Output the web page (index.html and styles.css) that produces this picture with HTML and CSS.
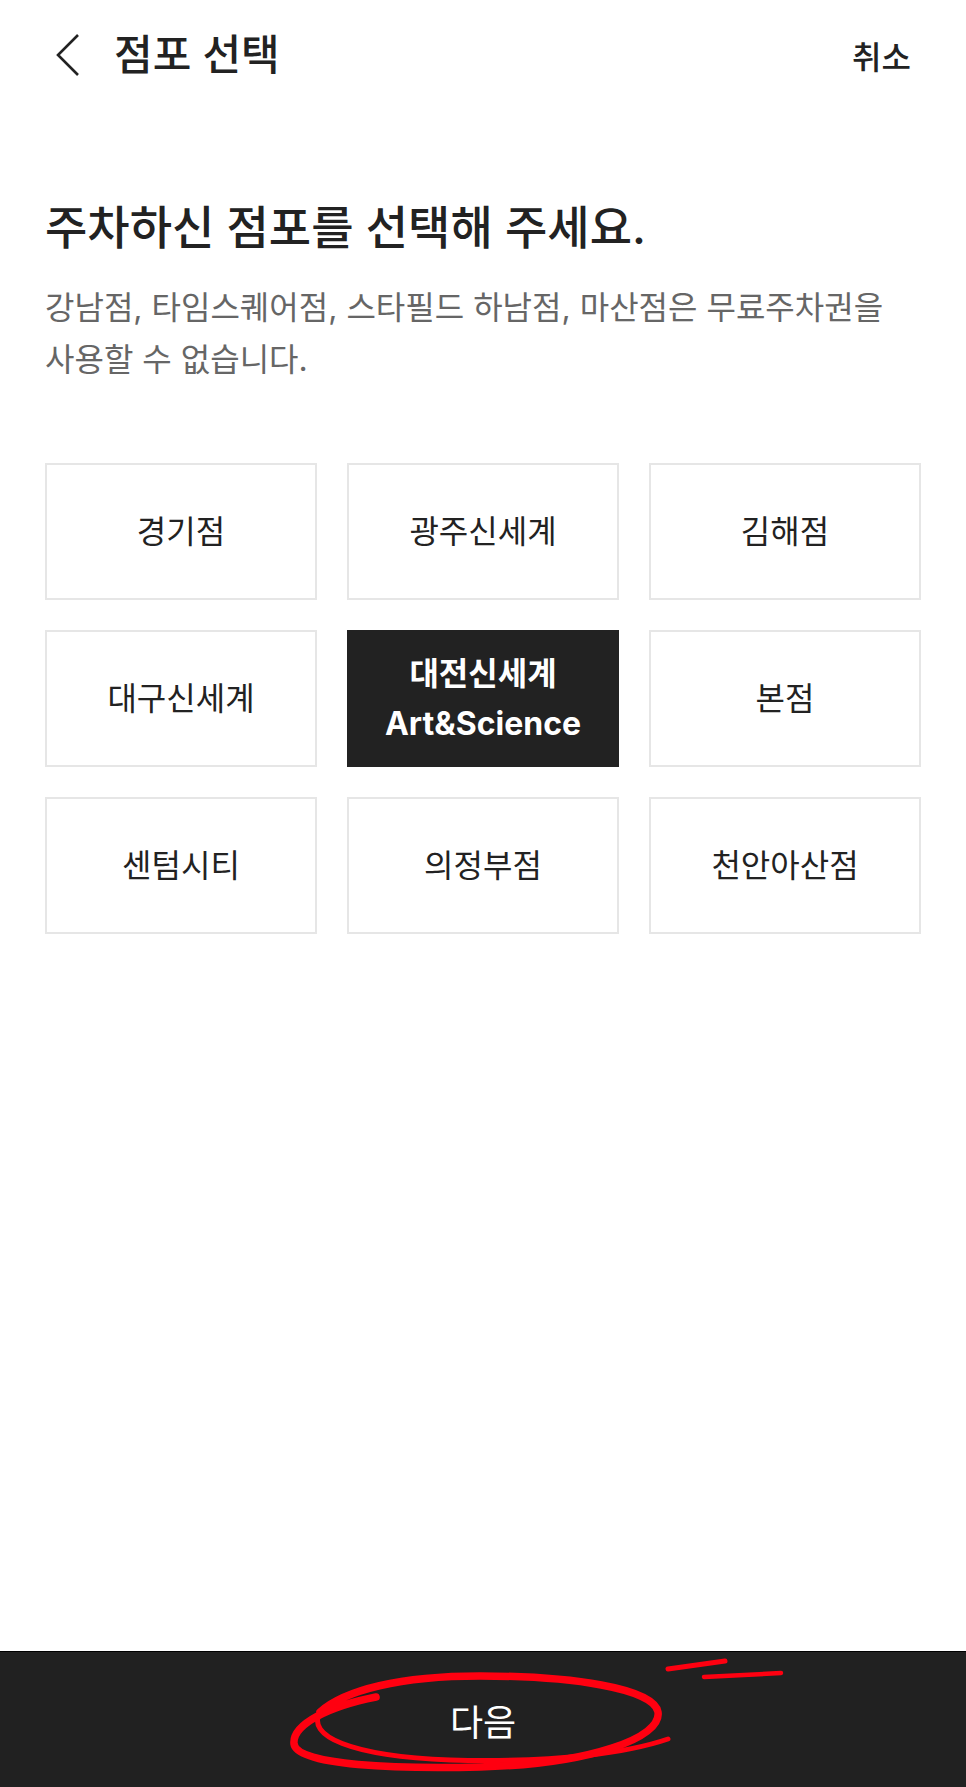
FILE: index.html
```html
<!DOCTYPE html>
<html lang="ko">
<head>
    <meta charset="UTF-8">
    <meta name="viewport" content="width=device-width, initial-scale=1.0">
    <title>점포 선택</title>
    <link rel="stylesheet" href="styles.css">
</head>
<body>
    <header class="topbar">
        <button class="back" type="button" aria-label="뒤로">
            <svg width="26" height="44" viewBox="0 0 26 44">
                <path d="M23 2 L3 22 L23 42" fill="none" stroke="#222" stroke-width="2.6"/>
            </svg>
        </button>
        <h1 class="title">점포 선택</h1>
        <a class="cancel" href="#">취소</a>
    </header>

    <main class="content">
        <h2 class="heading">주차하신 점포를 선택해 주세요.</h2>
        <p class="notice">강남점, 타임스퀘어점, 스타필드 하남점, 마산점은 무료주차권을 사용할 수 없습니다.</p>

        <div class="store-grid">
            <div class="store">경기점</div>
            <div class="store">광주신세계</div>
            <div class="store">김해점</div>
            <div class="store">대구신세계</div>
            <div class="store selected">대전신세계<br><span class="latin">Art&amp;Science</span></div>
            <div class="store">본점</div>
            <div class="store">센텀시티</div>
            <div class="store">의정부점</div>
            <div class="store">천안아산점</div>
        </div>
    </main>

    <footer class="next-bar">
        <span class="next-label">다음</span>
        <!-- 빨간 동그라미 표시 -->
        <svg class="scribble" viewBox="0 1651 966 136" width="966" height="136">
            <g fill="none" stroke="#ff0010" stroke-linecap="round">
                <path d="M376 1697 C 330 1706, 292 1724, 294 1744 C 297 1766, 400 1769, 480 1767 C 590 1764, 662 1738, 658 1712 C 654 1688, 570 1676, 480 1676 C 400 1676, 345 1690, 320 1712" stroke-width="7.5"/>
                <path d="M320 1712 C 306 1736, 350 1756, 450 1760 C 560 1763, 630 1752, 668 1739" stroke-width="5"/>
                <path d="M668 1669 L 725 1661" stroke-width="5"/>
                <path d="M704 1677 L 781 1673" stroke-width="4.5"/>
            </g>
        </svg>
    </footer>
</body>
</html>
```

FILE: styles.css
```css
* {
    box-sizing: border-box;
}
body {
    margin: 0;
    min-height: 100vh;
    display: flex;
    flex-direction: column;
    font-family: Inter, 'Noto Sans CJK KR', 'Noto Sans', sans-serif;
    color: #222;
    background-color: #fff;
}
.topbar {
    display: flex;
    align-items: center;
    height: 110px;
    padding: 0 55px 0 55px;
}
.back {
    display: flex;
    align-items: center;
    padding: 0;
    margin: 0;
    border: 0;
    background: none;
}
.title {
    margin: 0 0 0 33px;
    font-size: 42px;
    font-weight: 500;
    line-height: 1.3;
    flex: 1;
}
.cancel {
    font-size: 32px;
    font-weight: 500;
    color: #222;
    text-decoration: none;
}
.content {
    padding: 0 45px;
}
.heading {
    margin: 88px 0 0 0;
    font-size: 46px;
    font-weight: 500;
    line-height: 58px;
}
.notice {
    margin: 26px 0 0 0;
    font-size: 32px;
    line-height: 52px;
    color: #666;
    word-break: keep-all;
}
.store-grid {
    display: grid;
    grid-template-columns: repeat(3, 1fr);
    column-gap: 30px;
    row-gap: 30px;
    margin-top: 77px;
}
.store {
    height: 137px;
    display: flex;
    flex-direction: column;
    align-items: center;
    justify-content: center;
    text-align: center;
    border: 2px solid #e6e6e6;
    font-size: 32px;
    line-height: 47px;
}
.store.selected {
    background-color: #222;
    border-color: #222;
    color: #fff;
    font-weight: 700;
    line-height: 50px;
}
.latin {
    font-family: Inter, sans-serif;
}
.next-bar {
    position: relative;
    margin-top: auto;
    height: 136px;
    display: flex;
    align-items: center;
    justify-content: center;
    background-color: #212121;
    border-top: 1px solid #000;
}
.next-label {
    font-size: 36px;
    color: #fff;
}
.scribble {
    position: absolute;
    left: 0;
    top: -1px;
}
```
